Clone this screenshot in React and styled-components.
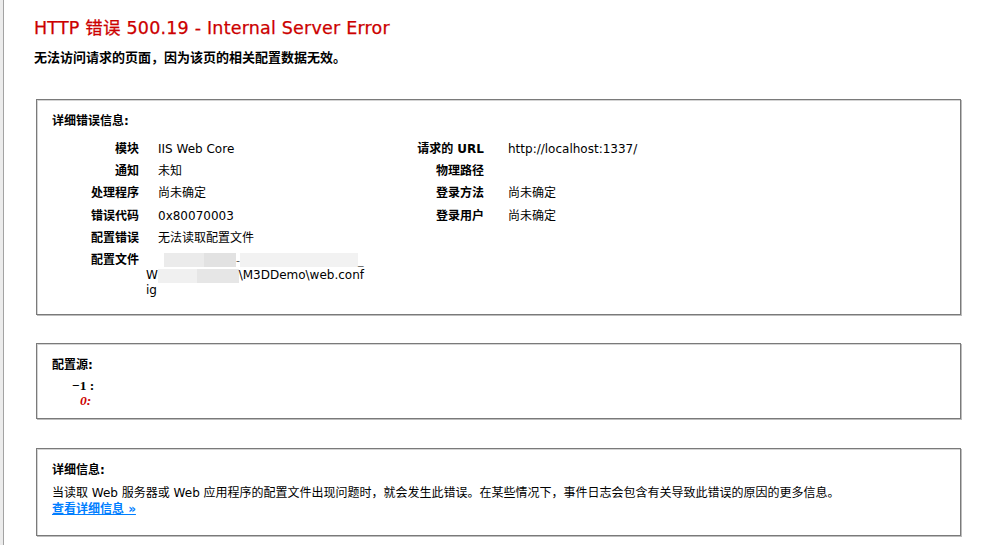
import styled, { createGlobalStyle } from "styled-components";

const GlobalStyle = createGlobalStyle`
  html, body { margin: 0; padding: 0; background: #fff; }
  body {
    font-family: "DejaVu Sans", "Noto Sans CJK SC", sans-serif;
    font-size: 12px;
    color: #000;
  }
`;

const WindowEdge = styled.div`
  min-height: 545px;
  border-left: 3px solid #ececec;
`;

const Page = styled.div`
  min-height: 545px;
  box-sizing: border-box;
  border-left: 1px solid #a3a3a3;
  padding: 17px 0 10px 30px;
`;

const Title = styled.h3`
  margin: 0;
  font-size: 17.5px;
  letter-spacing: 0.2px;
  line-height: 22px;
  font-weight: normal;
  color: #cc0000;
  -webkit-text-stroke: 0.25px #cc0000;
`;

const Subtitle = styled.h4`
  margin: 10px 0 0 0;
  font-size: 13px;
  line-height: 17px;
  font-weight: bold;
`;

const Box = styled.div`
  box-sizing: border-box;
  width: 925px;
  margin: ${(p) => p.$top}px 0 0 2px;
  padding: 13px 15px ${(p) => p.$bottom}px 15px;
  border: 1px solid #7a7a7a;
  box-shadow: inset 1px 1px 0 #d4d4d4, 1px 1px 0 #bdbdbd;
`;

const Legend = styled.div`
  font-weight: bold;
  font-size: 12px;
  line-height: 16px;
  color: #000;
  margin-bottom: ${(p) => p.$gap}px;
`;

const Details = styled.div`
  display: flex;
  align-items: flex-start;
  gap: 20px;
`;

const Column = styled.div`
  width: ${(p) => p.$width}px;
  flex: none;
`;

const Table = styled.table`
  width: 100%;
  border-collapse: collapse;
  table-layout: fixed;
`;

const Label = styled.th`
  width: ${(p) => p.$width}px;
  box-sizing: border-box;
  padding: 3px ${(p) => p.$pad}px 3px 0;
  text-align: right;
  vertical-align: top;
  font-weight: bold;
  line-height: 16.2px;
  white-space: nowrap;
`;

const Value = styled.td`
  padding: 3px 0 3px 0;
  vertical-align: top;
  line-height: 16.2px;
  white-space: nowrap;
`;

const Indented = styled.span`
  padding-left: 12px;
`;

const PathLine = styled.div`
  display: flex;
  align-items: center;
  height: ${(p) => p.$h}px;
  padding-left: ${(p) => p.$indent}px;
  line-height: 15px;
`;

const Blur = styled.span`
  display: inline-block;
  width: ${(p) => p.$w}px;
  height: 14px;
  background: ${(p) => p.$c};
`;

const Mark = styled.span`
  color: #555;
  font-size: 11px;
`;

const Code = styled.div`
  font-family: "Liberation Serif", "DejaVu Serif", serif;
  font-weight: bold;
  font-size: 13.5px;
  line-height: 15px;
  padding-left: ${(p) => p.$indent}px;
  color: ${(p) => (p.$hl ? "#cc0000" : "#000")};
  font-style: ${(p) => (p.$hl ? "italic" : "normal")};
`;

const CodeBlock = styled.div`
  margin-top: 5px;
`;

const Para = styled.p`
  margin: 0 0 10px 0;
  line-height: 16px;
`;

const MoreLink = styled.a`
  color: #007eff;
  font-weight: bold;
  text-decoration: underline;
  &:hover { text-decoration: none; }
`;

const leftRows = [
  ["模块", "IIS Web Core"],
  ["通知", "未知"],
  ["处理程序", "尚未确定"],
  ["错误代码", "0x80070003"],
  ["配置错误", "无法读取配置文件"],
];

const rightRows = [
  ["请求的 URL", "http://localhost:1337/"],
  ["物理路径", ""],
  ["登录方法", "尚未确定"],
  ["登录用户", "尚未确定"],
];

export default function App() {
  return (
    <>
      <GlobalStyle />
      <WindowEdge>
        <Page>
          <Title>HTTP 错误 500.19 - Internal Server Error</Title>
          <Subtitle>无法访问请求的页面，因为该页的相关配置数据无效。</Subtitle>

          <Box $top={33} $bottom={13}>
            <Legend $gap={9}>详细错误信息:</Legend>
            <Details>
              <Column $width={312}>
                <Table>
                  <tbody>
                    {leftRows.map(([k, v]) => (
                      <tr key={k}>
                        <Label $width={94} $pad={7}>{k}</Label>
                        <Value><Indented>{v}</Indented></Value>
                      </tr>
                    ))}
                    <tr>
                      <Label $width={94} $pad={7}>配置文件</Label>
                      <Value>
                        <PathLine $h={16} $indent={18}>
                          <Blur $w={40} $c="#ebebeb" />
                          <Blur $w={32} $c="#e2e2e2" />
                          <Mark>-</Mark>
                          <Blur $w={118} $c="#f2f2f2" />
                          <Mark>_</Mark>
                        </PathLine>
                        <PathLine $h={15} $indent={0}>
                          W<Blur $w={40} $c="#f0f0f0" />
                          <Blur $w={42} $c="#e6e6e6" />
                          \M3DDemo\web.conf
                        </PathLine>
                        <PathLine $h={15} $indent={0}>ig</PathLine>
                      </Value>
                    </tr>
                  </tbody>
                </Table>
              </Column>
              <Column $width={560}>
                <Table>
                  <tbody>
                    {rightRows.map(([k, v]) => (
                      <tr key={k}>
                        <Label $width={112} $pad={12}>{k}</Label>
                        <Value><Indented>{v}</Indented></Value>
                      </tr>
                    ))}
                  </tbody>
                </Table>
              </Column>
            </Details>
          </Box>

          <Box $top={28} $bottom={10}>
            <Legend $gap={0}>配置源:</Legend>
            <CodeBlock>
              <Code $indent={20}>−1 :</Code>
              <Code $indent={28} $hl>0:</Code>
            </CodeBlock>
          </Box>

          <Box $top={29} $bottom={8}>
            <Legend $gap={7}>详细信息:</Legend>
            <Para>
              当读取 Web 服务器或 Web 应用程序的配置文件出现问题时，就会发生此错误。在某些情况下，事件日志会包含有关导致此错误的原因的更多信息。
              <br />
              <MoreLink href="#">查看详细信息 »</MoreLink>
            </Para>
          </Box>
        </Page>
      </WindowEdge>
    </>
  );
}
